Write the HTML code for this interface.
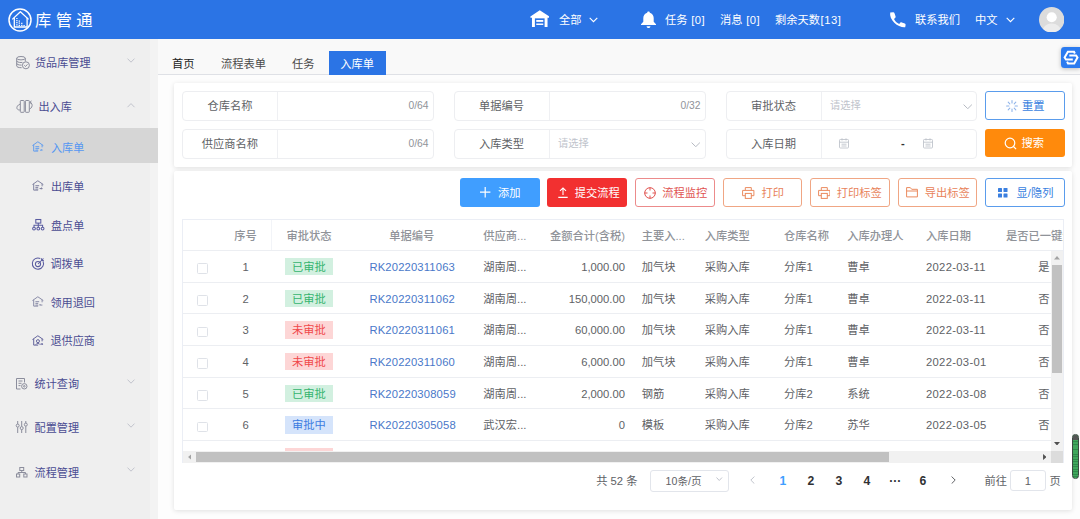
<!DOCTYPE html>
<html lang="zh-CN">
<head>
<meta charset="utf-8">
<title>库管通</title>
<style>
*{box-sizing:border-box;margin:0;padding:0}
html,body{width:1080px;height:519px;overflow:hidden}
body{font-family:"Liberation Sans","Noto Sans CJK SC",sans-serif;font-size:11.25px;color:#606266;background:#fdfdfd;position:relative}
.a{position:absolute;white-space:nowrap}
.hdr{position:absolute;left:0;top:0;width:1080px;height:39px;background:#2b74e5;color:#fff}
.hdr .brand{position:absolute;left:35px;top:8px;font-size:16.3px;letter-spacing:4.4px;line-height:24px;white-space:nowrap}
.hdr .it .l{letter-spacing:.5px;margin-left:.6px}
.hdr .it{position:absolute;top:0.8px;height:39px;line-height:39px;font-size:11.25px;white-space:nowrap}
.side{position:absolute;left:0;top:39px;width:158px;height:480px;background:#efefef}
.side .act{position:absolute;left:0;top:89px;width:158px;height:35px;background:#d6d6d6}
.side .t{position:absolute;height:20px;line-height:20px;font-size:11.1px;color:#4a4c92;white-space:nowrap}
.side .t.on{color:#5596f2}
.side svg{position:absolute;overflow:visible}
.tabs{position:absolute;left:158px;top:39px;width:922px;height:36px;background:#f9f9f9;border-bottom:1px solid #dfe1e6}
.tabs .tb{position:absolute;top:12.7px;height:23px;line-height:24px;font-size:11.25px;color:#4a4a4a;white-space:nowrap}
.tabs .tb.on{background:#2b74e5;color:#fff;text-align:center;top:12px;height:24px;line-height:26.6px}
.card{position:absolute;background:#fff;box-shadow:0 1px 5px rgba(0,0,0,.12);border-radius:2px}
.fld{position:absolute;height:30px;border:1px solid #edeef1;border-radius:4px;background:#fff}
.fld .lb{position:absolute;left:0;top:0;width:95px;height:28px;line-height:28px;text-align:center;border-right:1px solid #eff0f3;color:#606266;font-size:11.25px}
.fld .cnt{position:absolute;right:4px;top:0;line-height:28px;font-size:10.3px;color:#909399}
.fld .ph{position:absolute;left:103.5px;top:0;line-height:27px;font-size:10.3px;color:#c0c4cc}
.fld svg{position:absolute}
.btn{position:absolute;height:28.4px;border-radius:3px;font-size:11.25px;white-space:nowrap;border:1px solid transparent}
.btn span{position:absolute;top:0.7px;line-height:27px}
.btn svg{position:absolute}
.tbl{position:absolute;left:182px;top:219px;width:882px;height:244px;border:1px solid #ebeef5;border-bottom:none;overflow:hidden;background:#fff}
.tbl .hl{position:absolute;left:0;width:882px;height:1px;background:#eceef2}
.tbl .c{position:absolute;white-space:nowrap;height:20px;line-height:20px;font-size:11.25px;color:#606266}
.tbl .h{color:#909399;font-weight:500}
.tbl .lk{color:#4a78c9;letter-spacing:.15px}
.tbl .dt{letter-spacing:.3px}
.tag{position:absolute;left:101.7px;width:48.6px;height:17.4px;line-height:19.2px;overflow:hidden;text-align:center;font-size:11.25px}
.tag.g{background:#d2f0e0;color:#35b46e}
.tag.r{background:#fdd6d6;color:#f0484a}
.tag.b{background:#d5e4fb;color:#3b7be0}
.cb{position:absolute;left:14px;width:10.6px;height:10.6px;border:1px solid #dfe2e8;border-radius:1.5px;background:#fff}
.pg{position:absolute;white-space:nowrap;height:20px;line-height:20px;font-size:11.25px;color:#606266}
.pg.n{font-weight:bold;color:#303133;font-size:12.2px;text-align:center;width:20px}
</style>
</head>
<body>
<div class="hdr">
<svg class="a" style="left:7.5px;top:8px" width="24" height="24" viewBox="0 0 24 24"><circle cx="12" cy="12" r="11" fill="none" stroke="#fff" stroke-width="1.5"/><path d="M4.3 11.4 L12.4 3.7 L20.6 11.4" fill="none" stroke="#fff" stroke-width="1.3" stroke-linejoin="round"/><path d="M6.3 9.8v9.2h12.8V9.8" fill="none" stroke="#fff" stroke-width="1.3"/><path d="M8.9 9.9v8.4M11.3 12.5v5.8M13.8 14.7v3.6M16.1 16.9v1.4" stroke="#fff" stroke-width="1.3" stroke-dasharray="1.2 .9"/></svg>
<div class="brand">库管通</div>
<svg class="a" style="left:529.5px;top:9.5px" width="19.5" height="17.5" viewBox="0 0 20 18"><path d="M10 0.3 L19.6 6.6 V8 H18 V17.6 H2 V8 H0.4 V6.6 Z" fill="#fff"/><rect x="5" y="8.6" width="10" height="9" fill="#2b74e5"/><rect x="6.4" y="10.3" width="7.2" height="1.9" fill="#fff"/><rect x="6.4" y="13.9" width="7.2" height="1.5" fill="#fff"/></svg>
<div class="it" style="left:559px">全部</div>
<svg class="a" style="left:589.0px;top:17px" width="9" height="6" viewBox="0 0 9 6"><path d="M.7 .8 L4.5 4.7 L8.3 .8" fill="none" stroke="#fff" stroke-width="1.1"/></svg>
<svg class="a" style="left:639.5px;top:10.5px" width="17" height="18" viewBox="0 0 17 18"><path d="M8.5 0.6c.8 0 1.3.5 1.3 1.2 2.4.7 3.9 2.7 3.9 5.3v3.6l2.3 2.6v.8H1v-.8l2.3-2.6V7.1c0-2.6 1.5-4.6 3.9-5.3 0-.7.5-1.2 1.3-1.2z" fill="#fff"/><path d="M6.6 15.2h3.8c0 1.1-.8 1.9-1.9 1.9s-1.9-.8-1.9-1.9z" fill="#fff"/></svg>
<div class="it" style="left:665px">任务 <span class="l">[0]</span></div>
<div class="it" style="left:720px">消息 <span class="l">[0]</span></div>
<div class="it" style="left:775px">剩余天数<span class="l">[13]</span></div>
<svg class="a" style="left:888.5px;top:12px" width="17" height="15.5" viewBox="0 0 17 15.5"><path d="M1.2 .6 L4.2 .3 C4.9 .3 5.3 .7 5.5 1.3 L6.6 4.6 C6.8 5.2 6.6 5.7 6.1 6.1 L5 7 C6 9.2 7.8 11 10.2 12 L11.2 10.8 C11.6 10.3 12.2 10.2 12.8 10.4 L15.8 11.6 C16.4 11.9 16.7 12.4 16.6 13 L16.2 15.2 C13 15.6 8.5 14 5.3 10.8 C2.2 7.7 .6 3.8 1.2 .6z" fill="#fff"/></svg>
<div class="it" style="left:915px">联系我们</div>
<div class="it" style="left:975px">中文</div>
<svg class="a" style="left:1006.0px;top:17px" width="9" height="6" viewBox="0 0 9 6"><path d="M.7 .8 L4.5 4.7 L8.3 .8" fill="none" stroke="#fff" stroke-width="1.1"/></svg>
<svg class="a" style="left:1038.8px;top:6.8px" width="25.4" height="25.4" viewBox="0 0 26 26"><defs><clipPath id="av"><circle cx="13" cy="13" r="13"/></clipPath></defs><circle cx="13" cy="13" r="13" fill="#dcdcdc"/><g clip-path="url(#av)"><ellipse cx="13" cy="24.8" rx="9.5" ry="8" fill="#ececec"/><circle cx="13" cy="10.5" r="5.2" fill="#fff"/></g></svg>
</div>
<div class="side">
<div class="a" style="left:150px;top:0;width:8px;height:480px;background:#f3f3f3"></div>
<div class="act"></div>
<svg style="left:15.5px;top:17px" width="14" height="13.5" viewBox="0 0 14 13.5" fill="none" stroke="#8b8d9c" stroke-width="1"><ellipse cx="5" cy="2.2" rx="4.3" ry="1.7"/><path d="M.7 2.2v7.8c0 .9 1.9 1.7 4.3 1.7h.6M9.3 2.2v3.2M.7 4.8c0 .9 1.9 1.7 4.3 1.7.5 0 1 0 1.4-.1M.7 7.4c0 .9 1.9 1.7 4.3 1.7h.6"/><circle cx="9.9" cy="9.3" r="3.5"/><path d="M8.3 9.3l1.2 1.2 2-2.2"/></svg>
<div class="t" style="left:35px;top:14.1px">货品库管理</div>
<svg style="left:126.8px;top:19px" width="8" height="5" viewBox="0 0 8 5"><path d="M0.5 0.6 L4 4.2 L7.5 0.6" fill="none" stroke="#bcbec8" stroke-width=".9"/></svg>
<svg style="left:15.5px;top:61px" width="16.5" height="13" viewBox="0 0 16.5 13" fill="none" stroke="#8b8d9c" stroke-width="1"><rect x="4.3" y=".5" width="3.9" height="11.8" rx=".7"/><rect x="9.4" y=".5" width="3.9" height="11.8" rx=".7"/><path d="M4.3 4C1.5 5 .3 7.2 1.1 8.8c.6 1 1.8 1.4 3.2 1.1M13.3 9.3c2.2-1 3.4-3.4 2.6-5.2-.3-.8-1-1.3-2-1.5"/><path d="M15.3 .7l-1.3 1.8 1.9 .9"/></svg>
<div class="t" style="left:38.5px;top:58.3px">出入库</div>
<svg style="left:126.8px;top:64px" width="8" height="5" viewBox="0 0 8 5"><path d="M0.5 4.2 L4 0.6 L7.5 4.2" fill="none" stroke="#bcbec8" stroke-width=".9"/></svg>
<svg style="left:32.2px;top:102.3px" width="11.8" height="10.8" viewBox="0 0 12.5 11" fill="none" stroke="#5a9af0" stroke-width="1"><path d="M.5 4.6 L6.2 .6 L12 4.6M1.8 3.9v6.6h4.7M10.7 3.9v2.6"/><path d="M3.6 5.8h4M3.6 7.6h4M3.6 9.4h3M8.5 9.5h2.5l-1-1"/></svg>
<div class="t on" style="left:51px;top:99.1px">入库单</div>
<svg style="left:32.2px;top:141px" width="11.8" height="10.8" viewBox="0 0 12.5 11" fill="none" stroke="#7a7c9c" stroke-width="1"><path d="M.5 4.6 L6.2 .6 L12 4.6M1.8 3.9v6.6h4.7M10.7 3.9v2.6"/><path d="M3.6 5.8h4M3.6 7.6h3M3.6 9.4h3M8 8.8h2.8M9.8 7.8l1 1-1 1"/></svg>
<div class="t" style="left:51px;top:138px">出库单</div>
<svg style="left:32px;top:180px" width="12.6" height="11.5" viewBox="0 0 12.6 11.5" fill="none" stroke="#5a5ca0" stroke-width="1.05"><rect x="3.8" y=".5" width="5" height="3.6"/><path d="M6.3 4.1v2.2M2 8.2V6.3h8.6v1.9M6.3 6.3v1.9"/><circle cx="2" cy="9.6" r="1.4"/><circle cx="6.3" cy="9.6" r="1.4"/><circle cx="10.6" cy="9.6" r="1.4"/></svg>
<div class="t" style="left:51px;top:176.8px">盘点单</div>
<svg style="left:31.7px;top:217.6px" width="13" height="13" viewBox="0 0 13 13" fill="none" stroke="#5a5ca0" stroke-width="1.05"><path d="M11 4.2A5.6 5.6 0 1 1 8.3 1.5"/><circle cx="6" cy="7" r="2.6"/><path d="M6 7L11.5 1.5M9.6 1.2v2.2h2.2"/></svg>
<div class="t" style="left:50.5px;top:215.1px">调拨单</div>
<svg style="left:32.3px;top:257.2px" width="11.8" height="10.8" viewBox="0 0 12.5 11" fill="none" stroke="#8486a4" stroke-width="1"><path d="M.5 4.6 L6.2 .6 L12 4.6M1.8 3.9v6.6h4.7M10.7 3.9v2.6"/><path d="M3.6 5.8h4M3.6 7.6h3M3.6 9.4h3M8 9.4h3M9 8.3l-1 1.1"/></svg>
<div class="t" style="left:50.5px;top:253.6px">领用退回</div>
<svg style="left:32.3px;top:295.8px" width="11.8" height="10.8" viewBox="0 0 12.5 11" fill="none" stroke="#5c5e98" stroke-width="1"><path d="M.5 4.6 L6.2 .6 L12 4.6M1.8 3.9v6.6h4.7M10.7 3.9v2.6"/><circle cx="6.3" cy="6.3" r="1.6"/><path d="M4 10c.5-1.6 4-1.6 4.6 0M9 9.4h2.3M10.3 8.4l1 1-1 1"/></svg>
<div class="t" style="left:50.5px;top:291.6px">退供应商</div>
<svg style="left:16.3px;top:338.5px" width="11.5" height="11.5" viewBox="0 0 11.5 11.5" fill="none" stroke="#8b8d9c" stroke-width="1"><path d="M4.5 11H.5V.5h8v4M2.5 3h4M2.5 5.3h3M2.5 7.6h2"/><circle cx="8.3" cy="8.3" r="2.7"/><circle cx="8.3" cy="8.3" r=".8"/></svg>
<div class="t" style="left:34.6px;top:334.5px">统计查询</div>
<svg style="left:127.3px;top:339.7px" width="8" height="5" viewBox="0 0 8 5"><path d="M0.5 0.6 L4 4.2 L7.5 0.6" fill="none" stroke="#bcbec8" stroke-width=".9"/></svg>
<svg style="left:16px;top:382.4px" width="11.5" height="12" viewBox="0 0 11.5 12" fill="none" stroke="#8b8d9c" stroke-width="1"><path d="M1.7 0v3M1.7 6.2V12M5.7 0v5.5M5.7 8.7V12M9.8 0v2M9.8 5.2V12"/><circle cx="1.7" cy="4.6" r="1.5"/><circle cx="5.7" cy="7.1" r="1.5"/><circle cx="9.8" cy="3.6" r="1.5"/></svg>
<div class="t" style="left:34.6px;top:378.6px">配置管理</div>
<svg style="left:127.3px;top:383.7px" width="8" height="5" viewBox="0 0 8 5"><path d="M0.5 0.6 L4 4.2 L7.5 0.6" fill="none" stroke="#bcbec8" stroke-width=".9"/></svg>
<svg style="left:16px;top:427.5px" width="11.5" height="10.5" viewBox="0 0 11.5 10.5" fill="none" stroke="#8b8d9c" stroke-width="1"><rect x="3.8" y=".5" width="3.9" height="3"/><path d="M5.75 3.5v2M2 7V5.5h7.5V7"/><rect x=".5" y="7" width="3.2" height="3"/><rect x="7.8" y="7" width="3.2" height="3"/></svg>
<div class="t" style="left:34.6px;top:423.8px">流程管理</div>
<svg style="left:127.3px;top:428.3px" width="8" height="5" viewBox="0 0 8 5"><path d="M0.5 0.6 L4 4.2 L7.5 0.6" fill="none" stroke="#bcbec8" stroke-width=".9"/></svg>
</div>
<div class="tabs">
<div class="tb" style="left:14px;color:#222">首页</div>
<div class="tb" style="left:63px">流程表单</div>
<div class="tb" style="left:134px">任务</div>
<div class="tb on" style="left:171px;width:56.5px">入库单</div>
</div>
<svg class="a" style="left:1061px;top:47px;filter:drop-shadow(0 1px 2px rgba(0,0,0,.25))" width="19" height="21" viewBox="0 0 19 21"><path d="M3.5 0H19V21H3.5a3.5 3.5 0 0 1-3.5-3.5V3.5a3.5 3.5 0 0 1 3.5-3.5z" fill="#2b7bf0"/><path d="M13.9 6.5L13 4.7H6.9L3.6 10.5L5 12.6H11.8M6.1 14.6L7 16.4H13.2L16.5 10.6L15.1 8.4H8.3" fill="none" stroke="#fff" stroke-width="2" stroke-linejoin="miter"/></svg>
<div class="card" style="left:174px;top:83px;width:898px;height:83.5px"></div>
<div class="fld" style="left:182px;top:91px;width:251.5px"><div class="lb">仓库名称</div><div class="cnt">0/64</div></div>
<div class="fld" style="left:453.5px;top:91px;width:252px"><div class="lb">单据编号</div><div class="cnt">0/32</div></div>
<div class="fld" style="left:725.5px;top:91px;width:251.5px"><div class="lb">审批状态</div><div class="ph">请选择</div><svg style="left:236px;top:11.5px" width="9.5" height="5.5" viewBox="0 0 9.5 5.5"><path d="M.6 .6 L4.75 4.7 L8.9 .6" fill="none" stroke="#b6bac2" stroke-width="1"/></svg></div>
<div class="fld" style="left:182px;top:129px;width:251.5px"><div class="lb">供应商名称</div><div class="cnt">0/64</div></div>
<div class="fld" style="left:453.5px;top:129px;width:252px"><div class="lb">入库类型</div><div class="ph">请选择</div><svg style="left:236px;top:11.5px" width="9.5" height="5.5" viewBox="0 0 9.5 5.5"><path d="M.6 .6 L4.75 4.7 L8.9 .6" fill="none" stroke="#b6bac2" stroke-width="1"/></svg></div>
<div class="fld" style="left:725.5px;top:129px;width:251.5px"><div class="lb">入库日期</div><svg style="left:112.5px;top:8.2px" width="10" height="10.5" viewBox="0 0 10 10.5" fill="none" stroke="#c0c4cc" stroke-width=".9"><rect x=".5" y="1.5" width="9" height="8.5" rx=".8"/><path d="M.5 4.2h9M3 .3v2.2M7 .3v2.2M2.5 6.2h5M2.5 8h5"/></svg><div class="a" style="left:174.5px;top:-1.2px;line-height:28px;color:#303133;font-weight:bold">-</div><svg style="left:196.5px;top:8.2px" width="10" height="10.5" viewBox="0 0 10 10.5" fill="none" stroke="#c0c4cc" stroke-width=".9"><rect x=".5" y="1.5" width="9" height="8.5" rx=".8"/><path d="M.5 4.2h9M3 .3v2.2M7 .3v2.2M2.5 6.2h5M2.5 8h5"/></svg></div>
<div class="btn" style="left:985px;top:91.4px;width:79.5px;border-color:#5a9cec;background:#fff;color:#3a7fe0"><svg style="left:20px;top:7.5px" width="12" height="12" viewBox="0 0 12 12" stroke="#8fb4ea" stroke-width="1.1" stroke-linecap="round"><path d="M6 .6v2.3M6 9.1v2.3M.6 6h2.3M9.1 6h2.3M2.2 2.2l1.6 1.6M8.2 8.2l1.6 1.6M2.2 9.8l1.6-1.6M8.2 3.8l1.6-1.6"/></svg><span style="left:36px">重置</span></div>
<div class="btn" style="left:985px;top:128.5px;width:79.5px;background:#ff8a0c;color:#fff"><svg style="left:18.2px;top:7px" width="13" height="13" viewBox="0 0 13 13" fill="none" stroke="#fff" stroke-width="1.2"><circle cx="6" cy="6" r="4.8"/><path d="M9.5 9.5l2.6 2.6"/></svg><span style="left:35.5px">搜索</span></div>
<div class="card" style="left:174px;top:170.5px;width:898px;height:339px"></div>
<div class="btn" style="left:460px;top:178.3px;width:79.5px;background:#409eff;color:#fff"><svg style="left:19.2px;top:8px" width="10.4" height="10.4" viewBox="0 0 11 11"><path d="M5.5 0v11M0 5.5h11" stroke="#fff" stroke-width="1.25"/></svg><span style="left:37px">添加</span></div>
<div class="btn" style="left:547.4px;top:178.3px;width:79.5px;background:#f23030;color:#fff"><svg style="left:9.2px;top:8px" width="10" height="11" viewBox="0 0 10 11" fill="none" stroke="#fff" stroke-width="1.1"><path d="M5 8V1M2 3.8L5 .9l3 2.9M.3 10.4h9.4"/></svg><span style="left:26.3px">提交流程</span></div>
<div class="btn" style="left:635px;top:178.3px;width:79.5px;background:#fff;border-color:#ec8b8b;color:#e0524f"><svg style="left:8px;top:7.5px" width="12" height="12" viewBox="0 0 12 12" fill="none" stroke="#e0524f" stroke-width="1"><circle cx="6" cy="6" r="5.3"/><path d="M6 .5v3M6 8.5v3M.5 6h3M8.5 6h3"/></svg><span style="left:26.3px">流程监控</span></div>
<div class="btn" style="left:722.5px;top:178.3px;width:79.5px;background:#fff;border-color:#f0a684;color:#e8825a"><svg style="left:18.7px;top:7.5px" width="12.5" height="12" viewBox="0 0 12.5 12" fill="none" stroke="#ea8a5e" stroke-width="1"><path d="M3.3 3.3V.6h6v2.7M3.3 8.7H.6V3.4h11.3v5.3H9.2"/><rect x="3.3" y="6.4" width="6" height="5"/></svg><span style="left:38px">打印</span></div>
<div class="btn" style="left:810.2px;top:178.3px;width:79.5px;background:#fff;border-color:#f0a684;color:#e8825a"><svg style="left:6.5px;top:7.5px" width="12.5" height="12" viewBox="0 0 12.5 12" fill="none" stroke="#ea8a5e" stroke-width="1"><path d="M3.3 3.3V.6h6v2.7M3.3 8.7H.6V3.4h11.3v5.3H9.2"/><rect x="3.3" y="6.4" width="6" height="5"/></svg><span style="left:25.6px">打印标签</span></div>
<div class="btn" style="left:897.7px;top:178.3px;width:79.5px;background:#fff;border-color:#f0a684;color:#e8825a"><svg style="left:7.2px;top:8px" width="12" height="10.5" viewBox="0 0 12 10.5" fill="none" stroke="#ea8a5e" stroke-width="1" stroke-linejoin="round"><path d="M.6 .6h3.7l1.4 1.7h5.7v7.6H.6z"/><path d="M.6 4h10.8"/></svg><span style="left:26px">导出标签</span></div>
<div class="btn" style="left:985px;top:178.3px;width:79.5px;background:#fff;border-color:#5a9cec;color:#3a7fe0"><svg style="left:12.3px;top:9px" width="9.5" height="9.5" viewBox="0 0 9.5 9.5" fill="#3a7fe0"><rect width="4" height="4" rx=".5"/><rect x="5.5" width="4" height="4" rx=".5"/><rect y="5.5" width="4" height="4" rx=".5"/><rect x="5.5" y="5.5" width="4" height="4" rx=".5"/></svg><span style="left:30.5px">显/隐列</span></div>
<div class="tbl">
<div class="c h" style="left:12.4px;width:100px;text-align:center;top:5.8px">序号</div>
<div class="c h" style="left:76px;width:100px;text-align:center;top:5.8px">审批状态</div>
<div class="c h" style="left:178.8px;width:100px;text-align:center;top:5.8px">单据编号</div>
<div class="c h" style="left:300.3px;top:5.8px">供应商...</div>
<div class="c h" style="left:322px;width:120px;text-align:right;top:5.8px">金额合计(含税)</div>
<div class="c h" style="left:458.7px;top:5.8px">主要入...</div>
<div class="c h" style="left:521.7px;top:5.8px">入库类型</div>
<div class="c h" style="left:600.9px;top:5.8px">仓库名称</div>
<div class="c h" style="left:664.2px;top:5.8px">入库办理人</div>
<div class="c h" style="left:743px;top:5.8px">入库日期</div>
<div class="c h" style="left:823px;top:5.8px">是否已一键生成</div>
<div class="a" style="left:87.5px;top:0;width:1px;height:31px;background:#f2f4f8"></div>
<div class="hl" style="top:30px"></div>
<div class="hl" style="top:62px"></div>
<div class="cb" style="top:43.4px"></div>
<div class="c " style="left:12.6px;width:100px;text-align:center;top:36.8px">1</div>
<div class="tag g" style="top:37.9px">已审批</div>
<div class="c lk" style="left:186.4px;top:36.8px">RK20220311063</div>
<div class="c " style="left:300.3px;top:36.8px">湖南周...</div>
<div class="c " style="left:322px;width:120px;text-align:right;top:36.8px">1,000.00</div>
<div class="c " style="left:458.7px;top:36.8px">加气块</div>
<div class="c " style="left:521.7px;top:36.8px">采购入库</div>
<div class="c " style="left:600.9px;top:36.8px">分库1</div>
<div class="c " style="left:664.2px;top:36.8px">曹卓</div>
<div class="c dt" style="left:743px;top:36.8px">2022-03-11</div>
<div class="c " style="left:855.3px;top:36.8px">是</div>
<div class="hl" style="top:93px"></div>
<div class="cb" style="top:75.1px"></div>
<div class="c " style="left:12.6px;width:100px;text-align:center;top:68.5px">2</div>
<div class="tag g" style="top:69.6px">已审批</div>
<div class="c lk" style="left:186.4px;top:68.5px">RK20220311062</div>
<div class="c " style="left:300.3px;top:68.5px">湖南周...</div>
<div class="c " style="left:322px;width:120px;text-align:right;top:68.5px">150,000.00</div>
<div class="c " style="left:458.7px;top:68.5px">加气块</div>
<div class="c " style="left:521.7px;top:68.5px">采购入库</div>
<div class="c " style="left:600.9px;top:68.5px">分库1</div>
<div class="c " style="left:664.2px;top:68.5px">曹卓</div>
<div class="c dt" style="left:743px;top:68.5px">2022-03-11</div>
<div class="c " style="left:855.3px;top:68.5px">否</div>
<div class="hl" style="top:125px"></div>
<div class="cb" style="top:106.8px"></div>
<div class="c " style="left:12.6px;width:100px;text-align:center;top:100.2px">3</div>
<div class="tag r" style="top:101.3px">未审批</div>
<div class="c lk" style="left:186.4px;top:100.2px">RK20220311061</div>
<div class="c " style="left:300.3px;top:100.2px">湖南周...</div>
<div class="c " style="left:322px;width:120px;text-align:right;top:100.2px">60,000.00</div>
<div class="c " style="left:458.7px;top:100.2px">加气块</div>
<div class="c " style="left:521.7px;top:100.2px">采购入库</div>
<div class="c " style="left:600.9px;top:100.2px">分库1</div>
<div class="c " style="left:664.2px;top:100.2px">曹卓</div>
<div class="c dt" style="left:743px;top:100.2px">2022-03-11</div>
<div class="c " style="left:855.3px;top:100.2px">否</div>
<div class="hl" style="top:157px"></div>
<div class="cb" style="top:138.4px"></div>
<div class="c " style="left:12.6px;width:100px;text-align:center;top:131.8px">4</div>
<div class="tag r" style="top:132.9px">未审批</div>
<div class="c lk" style="left:186.4px;top:131.8px">RK20220311060</div>
<div class="c " style="left:300.3px;top:131.8px">湖南周...</div>
<div class="c " style="left:322px;width:120px;text-align:right;top:131.8px">6,000.00</div>
<div class="c " style="left:458.7px;top:131.8px">加气块</div>
<div class="c " style="left:521.7px;top:131.8px">采购入库</div>
<div class="c " style="left:600.9px;top:131.8px">分库1</div>
<div class="c " style="left:664.2px;top:131.8px">曹卓</div>
<div class="c dt" style="left:743px;top:131.8px">2022-03-01</div>
<div class="c " style="left:855.3px;top:131.8px">否</div>
<div class="hl" style="top:188px"></div>
<div class="cb" style="top:170.1px"></div>
<div class="c " style="left:12.6px;width:100px;text-align:center;top:163.5px">5</div>
<div class="tag g" style="top:164.6px">已审批</div>
<div class="c lk" style="left:186.4px;top:163.5px">RK20220308059</div>
<div class="c " style="left:300.3px;top:163.5px">湖南周...</div>
<div class="c " style="left:322px;width:120px;text-align:right;top:163.5px">2,000.00</div>
<div class="c " style="left:458.7px;top:163.5px">钢筋</div>
<div class="c " style="left:521.7px;top:163.5px">采购入库</div>
<div class="c " style="left:600.9px;top:163.5px">分库2</div>
<div class="c " style="left:664.2px;top:163.5px">系统</div>
<div class="c dt" style="left:743px;top:163.5px">2022-03-08</div>
<div class="c " style="left:855.3px;top:163.5px">否</div>
<div class="hl" style="top:220px"></div>
<div class="cb" style="top:201.8px"></div>
<div class="c " style="left:12.6px;width:100px;text-align:center;top:195.2px">6</div>
<div class="tag b" style="top:196.3px">审批中</div>
<div class="c lk" style="left:186.4px;top:195.2px">RK20220305058</div>
<div class="c " style="left:300.3px;top:195.2px">武汉宏...</div>
<div class="c " style="left:322px;width:120px;text-align:right;top:195.2px">0</div>
<div class="c " style="left:458.7px;top:195.2px">模板</div>
<div class="c " style="left:521.7px;top:195.2px">采购入库</div>
<div class="c " style="left:600.9px;top:195.2px">分库2</div>
<div class="c " style="left:664.2px;top:195.2px">苏华</div>
<div class="c dt" style="left:743px;top:195.2px">2022-03-05</div>
<div class="c " style="left:855.3px;top:195.2px">否</div>
<div class="tag r" style="top:228.0px">未审批</div>
<div class="a" style="left:868px;top:31px;width:13px;height:200px;background:#f1f1f1"></div>
<div class="a" style="left:869px;top:44.5px;width:10px;height:108.5px;background:#c1c1c1"></div>
<svg class="a" style="left:871px;top:36px" width="6" height="3.5" viewBox="0 0 7 4"><path d="M0 4L3.5 0 7 4z" fill="#a3a3a3"/></svg>
<svg class="a" style="left:871px;top:221.5px" width="6" height="3.5" viewBox="0 0 7 4"><path d="M0 0L3.5 4 7 0z" fill="#505050"/></svg>
<div class="a" style="left:0;top:230.6px;width:882px;height:12.4px;background:#f1f1f1"></div>
<div class="a" style="left:13.4px;top:232px;width:692.6px;height:10px;background:#c1c1c1"></div>
<svg class="a" style="left:4.5px;top:233.5px" width="3.5" height="6" viewBox="0 0 4 7"><path d="M4 0L0 3.5 4 7z" fill="#a3a3a3"/></svg>
<svg class="a" style="left:859.5px;top:233.5px" width="3.5" height="6" viewBox="0 0 4 7"><path d="M0 0L4 3.5 0 7z" fill="#505050"/></svg>
<div class="a" style="left:867.5px;top:230.6px;width:13px;height:12.4px;background:#dcdcdc"></div>
</div>
<div class="pg " style="left:596.2px;top:470.5px;">共 52 条</div>
<div class="a" style="left:650px;top:470px;width:78.5px;height:21.5px;border:1px solid #e2e5eb;border-radius:3px;background:#fff"></div>
<div class="pg " style="left:665.6px;top:470.5px;font-size:10.6px">10条/页</div>
<svg class="a" style="left:716px;top:476.5px" width="6.5" height="4.5" viewBox="0 0 6.5 4.5"><path d="M.5 .5L3.25 3.5 6 .5" fill="none" stroke="#c0c4cc" stroke-width="1"/></svg>
<svg class="a" style="left:749.5px;top:476px" width="5" height="8.2" viewBox="0 0 5.5 9"><path d="M4.8 .6L.9 4.5 4.8 8.4" fill="none" stroke="#c0c4cc" stroke-width="1.1"/></svg>
<div class="pg n" style="left:773px;top:470.5px;color:#409eff">1</div>
<div class="pg n" style="left:800.8px;top:470.5px;">2</div>
<div class="pg n" style="left:828.8px;top:470.5px;">3</div>
<div class="pg n" style="left:857px;top:470.5px;">4</div>
<div class="pg n" style="left:885.3px;top:470.5px;">···</div>
<div class="pg n" style="left:913px;top:470.5px;">6</div>
<svg class="a" style="left:951px;top:476px" width="5" height="8.2" viewBox="0 0 5.5 9"><path d="M.7 .6L4.6 4.5 .7 8.4" fill="none" stroke="#606266" stroke-width="1.1"/></svg>
<div class="pg " style="left:984.6px;top:470.5px;">前往</div>
<div class="a" style="left:1010px;top:469.6px;width:36px;height:21.5px;border:1px solid #e2e5eb;border-radius:3px;background:#fff"></div>
<div class="pg " style="left:1017.8px;top:470.5px;width:20px;text-align:center">1</div>
<div class="pg " style="left:1049.4px;top:470.5px;">页</div>
<div class="a" style="left:1072px;top:433.5px;width:6.5px;height:45.5px;border-radius:3.3px;background:repeating-linear-gradient(180deg,#3fa75c 0,#3fa75c 1.5px,#2f8a4a 1.5px,#2f8a4a 2.5px);overflow:hidden;border:1px solid #3a4a40"><div style="height:5px;background:#555"></div></div>
</body>
</html>
